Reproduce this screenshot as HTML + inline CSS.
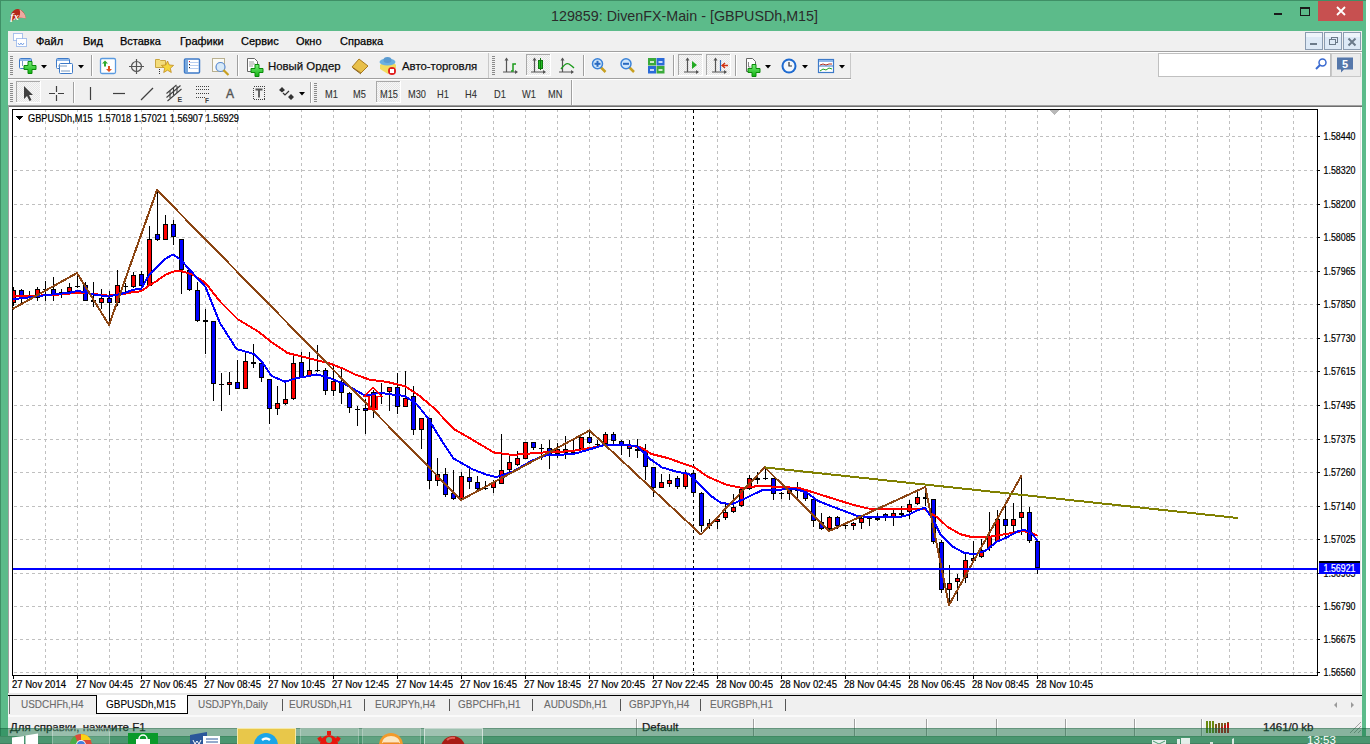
<!DOCTYPE html>
<html><head><meta charset="utf-8">
<style>
*{margin:0;padding:0;box-sizing:border-box}
html,body{width:1370px;height:744px;overflow:hidden;background:#fff;font-family:"Liberation Sans",sans-serif}
.a{position:absolute}
#win{position:absolute;left:0;top:0;width:1366px;height:744px;background:#5cbb8a;border-left:1px solid #3f8f66;border-top:1px solid #3f8f66}
.t{position:absolute;white-space:nowrap;font-family:"Liberation Sans",sans-serif;color:#000;-webkit-text-stroke:0.25px currentColor}
.menu{font-size:11px;top:35px}
.sep{position:absolute;width:1px;background:#a0a0a0;border-right:1px solid #fff}
.grip{position:absolute;width:4px;background:repeating-linear-gradient(#8c8c8c 0 1px,transparent 1px 2px)}
.hl{position:absolute;border:1px solid #c9c9c9;background:#f5f5f5}
.tb{position:absolute;font-size:10.5px;color:#3a3a3a}
.tab{position:absolute;font-size:11px;color:#6a6a6a;top:698px;transform:scaleX(0.905);transform-origin:0 0;-webkit-text-stroke:0.1px currentColor}
.tsep{position:absolute;top:699px;width:1px;height:12px;background:#555}
.st{font-size:11.5px;color:#1a1a1a;top:721px}
.ssep{position:absolute;top:719px;width:2px;height:17px;background:#a0a0a0;border-right:1px solid #fff}
.pl{font-family:"Liberation Sans",sans-serif;font-size:10.4px;fill:#000;stroke:#000;stroke-width:0.2px}
.tl{font-family:"Liberation Sans",sans-serif;font-size:10px;fill:#000;stroke:#000;stroke-width:0.2px}
.hd{font-family:"Liberation Sans",sans-serif;font-size:10.4px;fill:#000;stroke:#000;stroke-width:0.2px;white-space:pre}
.tf{top:87.5px;font-size:10.5px;color:#333;transform:scaleX(0.88);transform-origin:0 0;-webkit-text-stroke:0.1px currentColor}
</style></head><body>
<div id="win"></div>
<!-- title -->
<div class="t" style="left:551px;top:7.7px;font-size:14.3px;color:#2b2b2b;-webkit-text-stroke:0">129859: DivenFX-Main - [GBPUSDh,M15]</div>
<!-- client -->
<div class="a" style="left:8px;top:31px;width:1354px;height:697px;background:#f0f0f0"></div>
<div class="a" style="left:8px;top:51px;width:1354px;height:1px;background:#a0a0a0"></div>
<div class="a" style="left:8px;top:52px;width:1354px;height:1px;background:#fff"></div>
<div class="a" style="left:8px;top:78px;width:843px;height:1px;background:#a0a0a0"></div>
<div class="a" style="left:8px;top:79px;width:843px;height:1px;background:#fff"></div>
<div class="a" style="left:8px;top:105px;width:1354px;height:1px;background:#a0a0a0"></div>

<svg class="a" style="left:0;top:0" width="1370" height="110"><defs><pattern id="chk" width="2" height="2" patternUnits="userSpaceOnUse"><rect width="2" height="2" fill="#f7f7f7"/><rect width="1" height="1" fill="#e6e6e6"/><rect x="1" y="1" width="1" height="1" fill="#e6e6e6"/></pattern><linearGradient id="gplus" x1="0" y1="0" x2="0" y2="1"><stop offset="0" stop-color="#7af07a"/><stop offset="1" stop-color="#10b010"/></linearGradient></defs><path d="M10.5,20.8 C9.8,15 12,10 17,9 C21,8.6 25,12 25.9,18.6 C23,17.4 19.5,17.4 16.5,18.8 C14.5,19.8 12.5,21 10.5,20.8z" fill="#b3271a"/><path d="M19.5,9.6 C23,11 25.4,14.5 25.9,18.6 C23.5,17.6 20.5,17.4 18,18 C20,16 20.8,13 19.5,9.6z" fill="#eea9a0"/><text x="10.3" y="19.6" font-family="Liberation Serif" font-style="italic" font-weight="bold" font-size="10" fill="#fff">fx</text><rect x="1274" y="13" width="8" height="2" fill="#1a1a1a"/><rect x="1300.5" y="7.5" width="9" height="8" fill="none" stroke="#1a1a1a" stroke-width="1"/><rect x="1300" y="7" width="10" height="2" fill="#1a1a1a"/><rect x="1318" y="1" width="45" height="20" fill="#c75050"/><path d="M1337,7 L1345,15 M1345,7 L1337,15" stroke="#fff" stroke-width="1.8" fill="none"/><rect x="13.5" y="33.5" width="9" height="7" fill="#fff" stroke="#5a8de0" stroke-dasharray="1 1"/><rect x="16.5" y="38.5" width="10" height="8" fill="#fff" stroke="#5a8de0" stroke-dasharray="1 1"/><path d="M18,43 l1.5,2 l1.5,-2 l1.5,2 l1.5,-2" stroke="#5a8de0" fill="none" stroke-width=".8"/><rect x="1305.5" y="32.5" width="17" height="17" fill="#dde9f6" stroke="#8a9bb0"/><rect x="1306" y="33" width="16" height="4" fill="#eef4fb"/><rect x="1324.5" y="32.5" width="17" height="17" fill="#dde9f6" stroke="#8a9bb0"/><rect x="1325" y="33" width="16" height="4" fill="#eef4fb"/><rect x="1343.5" y="32.5" width="17" height="17" fill="#dde9f6" stroke="#8a9bb0"/><rect x="1344" y="33" width="16" height="4" fill="#eef4fb"/><rect x="1310" y="43" width="7" height="2" fill="#6b7a8a"/><rect x="1331.5" y="37.5" width="6" height="5" fill="none" stroke="#6b7a8a" stroke-width="1"/><rect x="1329.5" y="39.5" width="6" height="5" fill="#dde9f6" stroke="#6b7a8a" stroke-width="1"/><path d="M1348.5,38.5 L1355.5,45.5 M1355.5,38.5 L1348.5,45.5" stroke="#6b7a8a" stroke-width="2" fill="none"/><rect x="10" y="56" width="3" height="1" fill="#8a8a8a"/><rect x="10" y="58" width="3" height="1" fill="#8a8a8a"/><rect x="10" y="60" width="3" height="1" fill="#8a8a8a"/><rect x="10" y="62" width="3" height="1" fill="#8a8a8a"/><rect x="10" y="64" width="3" height="1" fill="#8a8a8a"/><rect x="10" y="66" width="3" height="1" fill="#8a8a8a"/><rect x="10" y="68" width="3" height="1" fill="#8a8a8a"/><rect x="10" y="70" width="3" height="1" fill="#8a8a8a"/><rect x="10" y="72" width="3" height="1" fill="#8a8a8a"/><rect x="10" y="74" width="3" height="1" fill="#8a8a8a"/><rect x="19.5" y="58.5" width="12" height="10" rx="1" fill="#fff" stroke="#3d7ac8"/><rect x="20" y="59" width="11" height="2" fill="#8fb8ea"/><path d="M22.5,61 v5" stroke="#7a9ac0"/><path d="M28,61.5 h4 v4 h4 v4 h-4 v4 h-4 v-4 h-4 v-4 h4z" fill="url(#gplus)" stroke="#0a8a0a" stroke-width="1"/><path d="M41,65 h6 l-3,3.5 z" fill="#000"/><rect x="56.5" y="58.5" width="13" height="10" rx="1" fill="#fff" stroke="#3d7ac8"/><rect x="57" y="59" width="12" height="2" fill="#8fb8ea"/><rect x="59.5" y="63.5" width="13" height="10" rx="1" fill="#fff" stroke="#3d7ac8"/><path d="M58,66 h9 M61,71 h9" stroke="#7a9ac0"/><path d="M78,65 h6 l-3,3.5 z" fill="#000"/><rect x="91" y="55" width="1" height="21" fill="#a0a0a0"/><rect x="92" y="55" width="1" height="21" fill="#fff"/><rect x="100.5" y="58.5" width="15" height="15" rx="1.5" fill="#fff" stroke="#5a9ae0" stroke-width="1.3"/><path d="M105,60.5 l3,3 h-2 v3 h-2 v-3 h-2z" fill="#2faa2f"/><path d="M109,72 l3,-3 h-2 v-3 h-2 v3 h-2z" fill="#e0501e"/><circle cx="136.5" cy="66.5" r="5" fill="none" stroke="#555" stroke-width="1.2"/><path d="M136.5,59 v15 M129,66.5 h15" stroke="#555" stroke-width="1.2"/><path d="M155.5,59.5 h4 l1,1 h5 v7 h-10z" fill="#f3dc7a" stroke="#c9a640"/><path d="M167.5,61 l1.8,4 4.3,.4 -3.3,2.9 1,4.2 -3.8,-2.3 -3.8,2.3 1,-4.2 -3.3,-2.9 4.3,-.4z" fill="#f5d63c" stroke="#c08a20" stroke-width=".8"/><path d="M159.5,69 v5" stroke="#333" stroke-dasharray="1 1"/><rect x="184.5" y="59" width="15" height="14" rx="1" fill="#fff" stroke="#3d7ac8" stroke-width="1.5"/><rect x="185" y="60" width="3" height="12" fill="#7aa8dc"/><path d="M189,62.5 h10 M189,65.5 h10 M189,68.5 h10" stroke="#b8cff0"/><rect x="189" y="61" width="1" height="1" fill="#e02020"/><rect x="189" y="64" width="1" height="1" fill="#222"/><rect x="189" y="67" width="1" height="1" fill="#222"/><rect x="212.5" y="58.5" width="12" height="13" fill="#fbfaf3" stroke="#b8b090"/><circle cx="220.5" cy="67" r="4.5" fill="#d8eaf8" stroke="#5a8ad0" stroke-width="1.2"/><path d="M223.5,70 l5,5" stroke="#c8a020" stroke-width="2.2"/><rect x="237" y="55" width="1" height="21" fill="#a0a0a0"/><rect x="238" y="55" width="1" height="21" fill="#fff"/><path d="M247.5,58.5 h7 l3,3 v10 h-10z" fill="#fff" stroke="#666"/><path d="M249,62 h5 M249,64 h6 M249,66 h4" stroke="#888" stroke-width=".8"/><path d="M255,64.5 h4 v4 h4 v4 h-4 v4 h-4 v-4 h-4 v-4 h4z" fill="url(#gplus)" stroke="#0a8a0a"/><path d="M352,67 l7,-8 l9,7 l-7,7z" fill="#e8c04a" stroke="#a87a20"/><path d="M353,68 l8,6" stroke="#8a6018"/><path d="M380,65 q8,-9 16,0 v3 l-8,6 l-8,-5z" fill="#f2dc60"/><ellipse cx="387.5" cy="62" rx="8" ry="3.5" fill="#6ab0e0"/><ellipse cx="387.5" cy="60" rx="4" ry="3" fill="#5a9ad0"/><circle cx="392" cy="71" r="4" fill="#e02020"/><rect x="390" y="69" width="4" height="4" fill="#fff"/><rect x="488" y="53" width="1" height="25" fill="#c8c8c8"/><rect x="850" y="53" width="1" height="25" fill="#c8c8c8"/><rect x="492" y="56" width="3" height="1" fill="#8a8a8a"/><rect x="492" y="58" width="3" height="1" fill="#8a8a8a"/><rect x="492" y="60" width="3" height="1" fill="#8a8a8a"/><rect x="492" y="62" width="3" height="1" fill="#8a8a8a"/><rect x="492" y="64" width="3" height="1" fill="#8a8a8a"/><rect x="492" y="66" width="3" height="1" fill="#8a8a8a"/><rect x="492" y="68" width="3" height="1" fill="#8a8a8a"/><rect x="492" y="70" width="3" height="1" fill="#8a8a8a"/><rect x="492" y="72" width="3" height="1" fill="#8a8a8a"/><rect x="492" y="74" width="3" height="1" fill="#8a8a8a"/><g stroke="#555" stroke-width="1.2" fill="none"><path d="M506.5,58.5 v14 M503,72.0 h14"/></g><path d="M506.5,57.5 l-2,3 h4z M518,72.0 l-3,-2 v4z" fill="#555"/><path d="M511,71 h2 v-7 h3" stroke="#1a9a1a" fill="none" stroke-width="1.5"/><rect x="526" y="54" width="25" height="22" fill="url(#chk)"/><rect x="526" y="54" width="25" height="1" fill="#a8a8a8"/><rect x="526" y="54" width="1" height="22" fill="#a8a8a8"/><rect x="526" y="75" width="25" height="1" fill="#fff"/><rect x="550" y="54" width="1" height="22" fill="#fff"/><g stroke="#555" stroke-width="1.2" fill="none"><path d="M534.5,58.5 v14 M531,72.0 h14"/></g><path d="M534.5,57.5 l-2,3 h4z M546,72.0 l-3,-2 v4z" fill="#555"/><rect x="538.5" y="60.5" width="4" height="8" fill="#22c022" stroke="#117711"/><path d="M540.5,58 v12" stroke="#117711"/><g stroke="#555" stroke-width="1.2" fill="none"><path d="M562.5,58.5 v14 M559,72.0 h14"/></g><path d="M562.5,57.5 l-2,3 h4z M574,72.0 l-3,-2 v4z" fill="#555"/><path d="M561,69 q5,-7 8,-5 t5,4" stroke="#1a9a1a" fill="none" stroke-width="1.3"/><rect x="583" y="55" width="1" height="21" fill="#a0a0a0"/><rect x="584" y="55" width="1" height="21" fill="#fff"/><path d="M600.5,67 l5,5" stroke="#c8a020" stroke-width="2.5"/><circle cx="597.5" cy="63.8" r="5" fill="#cfe6fa" stroke="#3a82d8" stroke-width="1.5"/><path d="M594.5,63.8 h6" stroke="#2a6ac0" stroke-width="2"/><path d="M597.5,60.8 v6" stroke="#2a6ac0" stroke-width="2"/><path d="M629,67 l5,5" stroke="#c8a020" stroke-width="2.5"/><circle cx="626" cy="63.8" r="5" fill="#cfe6fa" stroke="#3a82d8" stroke-width="1.5"/><path d="M623,63.8 h6" stroke="#2a6ac0" stroke-width="2"/><rect x="648" y="58" width="8" height="7.5" fill="#3aaa3a"/><rect x="656.5" y="58" width="8" height="7.5" fill="#2a6ad8"/><rect x="648" y="66" width="8" height="7.5" fill="#2a6ad8"/><rect x="656.5" y="66" width="8" height="7.5" fill="#3aaa3a"/><path d="M650,62 h4 M658.5,62 h4 M650,70 h4 M658.5,70 h4" stroke="#fff" stroke-width="1.5"/><rect x="673" y="55" width="1" height="21" fill="#a0a0a0"/><rect x="674" y="55" width="1" height="21" fill="#fff"/><rect x="678" y="54" width="25" height="22" fill="url(#chk)"/><rect x="678" y="54" width="25" height="1" fill="#a8a8a8"/><rect x="678" y="54" width="1" height="22" fill="#a8a8a8"/><rect x="678" y="75" width="25" height="1" fill="#fff"/><rect x="702" y="54" width="1" height="22" fill="#fff"/><g stroke="#555" stroke-width="1.2" fill="none"><path d="M687.5,58.5 v14 M684,72.0 h14"/></g><path d="M687.5,57.5 l-2,3 h4z M699,72.0 l-3,-2 v4z" fill="#555"/><path d="M692,61 l5,4 l-5,4z" fill="#22aa22"/><rect x="706" y="54" width="25" height="22" fill="url(#chk)"/><rect x="706" y="54" width="25" height="1" fill="#a8a8a8"/><rect x="706" y="54" width="1" height="22" fill="#a8a8a8"/><rect x="706" y="75" width="25" height="1" fill="#fff"/><rect x="730" y="54" width="1" height="22" fill="#fff"/><g stroke="#555" stroke-width="1.2" fill="none"><path d="M715.5,58.5 v14 M712,72.0 h14"/></g><path d="M715.5,57.5 l-2,3 h4z M727,72.0 l-3,-2 v4z" fill="#555"/><path d="M720.5,60 v11" stroke="#2a6ac0" stroke-width="1.2"/><path d="M728,65.5 h-5 M725,63 l-3,2.5 3,2.5" stroke="#d03010" stroke-width="1.3" fill="none"/><rect x="735" y="55" width="1" height="21" fill="#a0a0a0"/><rect x="736" y="55" width="1" height="21" fill="#fff"/><path d="M746.5,58.5 h6 l3,3 v10 h-9z" fill="#fff" stroke="#666"/><path d="M748.5,62 v5 h2" stroke="#666" fill="none" stroke-width=".8"/><path d="M752,66.5 h4 v4 h4 v4 h-4 v4 h-4 v-4 h-4 v-4 h4z" fill="url(#gplus)" stroke="#0a8a0a" transform="translate(0,-2)"/><path d="M765,65 h6 l-3,3.5 z" fill="#000"/><circle cx="789" cy="66" r="7.5" fill="#1e6ad0"/><circle cx="789" cy="66" r="5.5" fill="#f4f8fc"/><path d="M789,62 v4 h3" stroke="#333" fill="none" stroke-width="1.2"/><path d="M802,65 h6 l-3,3.5 z" fill="#000"/><rect x="818.5" y="59.5" width="15" height="13" fill="#fff" stroke="#3d7ac8" stroke-width="1.2"/><rect x="819" y="60" width="14" height="2" fill="#8fb8ea"/><path d="M819,66 h14" stroke="#3d7ac8"/><path d="M820,65 l3,-1 3,1 3,-1 3,0" stroke="#b03020" fill="none"/><path d="M820,71 l3,-2 3,1 3,-2 3,1" stroke="#20a020" fill="none"/><path d="M839,65 h6 l-3,3.5 z" fill="#000"/><rect x="1158.5" y="53.5" width="172" height="23" fill="#fff" stroke="#c0c0c0"/><circle cx="1322.5" cy="62.5" r="3.5" fill="none" stroke="#3a6ad0" stroke-width="1.5"/><path d="M1320,65 l-4,4" stroke="#3a6ad0" stroke-width="2"/><rect x="1331.5" y="53.5" width="29" height="23" fill="#ececec" stroke="#c8c8c8"/><path d="M1337,57.5 h16 v12 h-9 l-3,3 v-3 h-4z" fill="#5577aa"/><text x="1342" y="68" font-family="Liberation Sans" font-size="11" font-weight="bold" fill="#fff">5</text><rect x="10" y="83" width="3" height="1" fill="#8a8a8a"/><rect x="10" y="85" width="3" height="1" fill="#8a8a8a"/><rect x="10" y="87" width="3" height="1" fill="#8a8a8a"/><rect x="10" y="89" width="3" height="1" fill="#8a8a8a"/><rect x="10" y="91" width="3" height="1" fill="#8a8a8a"/><rect x="10" y="93" width="3" height="1" fill="#8a8a8a"/><rect x="10" y="95" width="3" height="1" fill="#8a8a8a"/><rect x="10" y="97" width="3" height="1" fill="#8a8a8a"/><rect x="10" y="99" width="3" height="1" fill="#8a8a8a"/><rect x="10" y="101" width="3" height="1" fill="#8a8a8a"/><rect x="16" y="81" width="25" height="22" fill="url(#chk)"/><rect x="16" y="81" width="25" height="1" fill="#a8a8a8"/><rect x="16" y="81" width="1" height="22" fill="#a8a8a8"/><rect x="16" y="102" width="25" height="1" fill="#fff"/><rect x="40" y="81" width="1" height="22" fill="#fff"/><path d="M24,86 v13 l3,-3 l2.5,5 l2,-1 l-2.5,-5 h4z" fill="#404040"/><path d="M56.5,86 v6 M56.5,95 v6 M49,93.5 h6 M58,93.5 h6" stroke="#404040" stroke-width="1.2"/><rect x="73" y="82" width="1" height="21" fill="#a0a0a0"/><rect x="74" y="82" width="1" height="21" fill="#fff"/><path d="M90.5,87 v13" stroke="#404040" stroke-width="1.2"/><path d="M113,93.5 h12" stroke="#404040" stroke-width="1.2"/><path d="M141,100 l12,-12" stroke="#404040" stroke-width="1.2"/><path d="M166.5,97.5 l14,-12 M167.5,101 l14,-12 M166.5,93.5 l10,-8.5" stroke="#404040" stroke-width="1.1" fill="none"/><path d="M170,91 v7 M173.5,88 v7 M177,86 v7" stroke="#404040" stroke-width="1.1" fill="none"/><text x="177.5" y="102" font-family="Liberation Sans" font-size="7" font-weight="bold" fill="#404040">E</text><path d="M196,86.5 h13 M196,89.5 h13 M196,93.5 h13 M196,97.5 h9" stroke="#404040" stroke-dasharray="1 1" shape-rendering="crispEdges"/><text x="205" y="102.5" font-family="Liberation Sans" font-size="6.5" font-weight="bold" fill="#404040">F</text><text x="226" y="98" font-family="Liberation Sans" font-size="12" fill="#555" stroke="#555" stroke-width="0.4">A</text><rect x="253.5" y="86.5" width="11" height="13" fill="none" stroke="#404040" stroke-dasharray="1 1" shape-rendering="crispEdges"/><path d="M255.5,89.5 h7 M259,89.5 v8" stroke="#555" stroke-width="1.8"/><path d="M282,87 l3,3 l-3,2.5 l-3,-2.5z M291,94 l3,3 l-3,3 l-3,-3z" fill="#333"/><path d="M283,93 l2,2 l4,-4" stroke="#333" stroke-width="1.2" fill="none"/><path d="M299,92 h6 l-3,3.5 z" fill="#000"/><rect x="310" y="82" width="1" height="21" fill="#a0a0a0"/><rect x="311" y="82" width="1" height="21" fill="#fff"/><rect x="314" y="83" width="3" height="1" fill="#8a8a8a"/><rect x="314" y="85" width="3" height="1" fill="#8a8a8a"/><rect x="314" y="87" width="3" height="1" fill="#8a8a8a"/><rect x="314" y="89" width="3" height="1" fill="#8a8a8a"/><rect x="314" y="91" width="3" height="1" fill="#8a8a8a"/><rect x="314" y="93" width="3" height="1" fill="#8a8a8a"/><rect x="314" y="95" width="3" height="1" fill="#8a8a8a"/><rect x="314" y="97" width="3" height="1" fill="#8a8a8a"/><rect x="314" y="99" width="3" height="1" fill="#8a8a8a"/><rect x="314" y="101" width="3" height="1" fill="#8a8a8a"/><rect x="376" y="81" width="25" height="22" fill="url(#chk)"/><rect x="376" y="81" width="25" height="1" fill="#a8a8a8"/><rect x="376" y="81" width="1" height="22" fill="#a8a8a8"/><rect x="376" y="102" width="25" height="1" fill="#fff"/><rect x="400" y="81" width="1" height="22" fill="#fff"/><rect x="571" y="80" width="1" height="25" fill="#a0a0a0"/><rect x="572" y="80" width="1" height="25" fill="#fff"/></svg>
<!-- menu -->
<div class="t menu" style="left:36px">Файл</div>
<div class="t menu" style="left:83px">Вид</div>
<div class="t menu" style="left:120px">Вставка</div>
<div class="t menu" style="left:180px">Графики</div>
<div class="t menu" style="left:241px">Сервис</div>
<div class="t menu" style="left:296px">Окно</div>
<div class="t menu" style="left:340px">Справка</div>

<div class="t" style="left:268px;top:60px;font-size:11.4px;color:#111">Новый Ордер</div>
<div class="t" style="left:402px;top:60px;font-size:11.4px;color:#111">Авто-торговля</div>
<div class="t tf" style="left:325px">M1</div>
<div class="t tf" style="left:353px">M5</div>
<div class="t tf" style="left:380px">M15</div>
<div class="t tf" style="left:408px">M30</div>
<div class="t tf" style="left:437px">H1</div>
<div class="t tf" style="left:465px">H4</div>
<div class="t tf" style="left:494px">D1</div>
<div class="t tf" style="left:522px">W1</div>
<div class="t tf" style="left:548px">MN</div>
<!-- chart area -->
<div class="a" style="left:8px;top:106px;width:1354px;height:589px;background:#fff;border-left:1px solid #a0a0a0"></div>
<svg class="a" style="left:0;top:0" width="1370" height="744" shape-rendering="crispEdges"><rect x="9" y="107" width="1352" height="586" fill="#fff"/><rect x="1360" y="107" width="1" height="586" fill="#e3e3e3"/><line x1="45.5" y1="110" x2="45.5" y2="675" stroke="#c0c0c0" stroke-dasharray="3 3" stroke-dashoffset="1"/><line x1="77.5" y1="110" x2="77.5" y2="675" stroke="#c0c0c0" stroke-dasharray="3 3" stroke-dashoffset="1"/><line x1="109.5" y1="110" x2="109.5" y2="675" stroke="#c0c0c0" stroke-dasharray="3 3" stroke-dashoffset="1"/><line x1="141.5" y1="110" x2="141.5" y2="675" stroke="#c0c0c0" stroke-dasharray="3 3" stroke-dashoffset="1"/><line x1="173.5" y1="110" x2="173.5" y2="675" stroke="#c0c0c0" stroke-dasharray="3 3" stroke-dashoffset="1"/><line x1="205.5" y1="110" x2="205.5" y2="675" stroke="#c0c0c0" stroke-dasharray="3 3" stroke-dashoffset="1"/><line x1="237.5" y1="110" x2="237.5" y2="675" stroke="#c0c0c0" stroke-dasharray="3 3" stroke-dashoffset="1"/><line x1="269.5" y1="110" x2="269.5" y2="675" stroke="#c0c0c0" stroke-dasharray="3 3" stroke-dashoffset="1"/><line x1="301.5" y1="110" x2="301.5" y2="675" stroke="#c0c0c0" stroke-dasharray="3 3" stroke-dashoffset="1"/><line x1="333.5" y1="110" x2="333.5" y2="675" stroke="#c0c0c0" stroke-dasharray="3 3" stroke-dashoffset="1"/><line x1="365.5" y1="110" x2="365.5" y2="675" stroke="#c0c0c0" stroke-dasharray="3 3" stroke-dashoffset="1"/><line x1="397.5" y1="110" x2="397.5" y2="675" stroke="#c0c0c0" stroke-dasharray="3 3" stroke-dashoffset="1"/><line x1="429.5" y1="110" x2="429.5" y2="675" stroke="#c0c0c0" stroke-dasharray="3 3" stroke-dashoffset="1"/><line x1="461.5" y1="110" x2="461.5" y2="675" stroke="#c0c0c0" stroke-dasharray="3 3" stroke-dashoffset="1"/><line x1="493.5" y1="110" x2="493.5" y2="675" stroke="#c0c0c0" stroke-dasharray="3 3" stroke-dashoffset="1"/><line x1="525.5" y1="110" x2="525.5" y2="675" stroke="#c0c0c0" stroke-dasharray="3 3" stroke-dashoffset="1"/><line x1="557.5" y1="110" x2="557.5" y2="675" stroke="#c0c0c0" stroke-dasharray="3 3" stroke-dashoffset="1"/><line x1="589.5" y1="110" x2="589.5" y2="675" stroke="#c0c0c0" stroke-dasharray="3 3" stroke-dashoffset="1"/><line x1="621.5" y1="110" x2="621.5" y2="675" stroke="#c0c0c0" stroke-dasharray="3 3" stroke-dashoffset="1"/><line x1="653.5" y1="110" x2="653.5" y2="675" stroke="#c0c0c0" stroke-dasharray="3 3" stroke-dashoffset="1"/><line x1="685.5" y1="110" x2="685.5" y2="675" stroke="#c0c0c0" stroke-dasharray="3 3" stroke-dashoffset="1"/><line x1="717.5" y1="110" x2="717.5" y2="675" stroke="#c0c0c0" stroke-dasharray="3 3" stroke-dashoffset="1"/><line x1="749.5" y1="110" x2="749.5" y2="675" stroke="#c0c0c0" stroke-dasharray="3 3" stroke-dashoffset="1"/><line x1="781.5" y1="110" x2="781.5" y2="675" stroke="#c0c0c0" stroke-dasharray="3 3" stroke-dashoffset="1"/><line x1="813.5" y1="110" x2="813.5" y2="675" stroke="#c0c0c0" stroke-dasharray="3 3" stroke-dashoffset="1"/><line x1="845.5" y1="110" x2="845.5" y2="675" stroke="#c0c0c0" stroke-dasharray="3 3" stroke-dashoffset="1"/><line x1="877.5" y1="110" x2="877.5" y2="675" stroke="#c0c0c0" stroke-dasharray="3 3" stroke-dashoffset="1"/><line x1="909.5" y1="110" x2="909.5" y2="675" stroke="#c0c0c0" stroke-dasharray="3 3" stroke-dashoffset="1"/><line x1="941.5" y1="110" x2="941.5" y2="675" stroke="#c0c0c0" stroke-dasharray="3 3" stroke-dashoffset="1"/><line x1="973.5" y1="110" x2="973.5" y2="675" stroke="#c0c0c0" stroke-dasharray="3 3" stroke-dashoffset="1"/><line x1="1005.5" y1="110" x2="1005.5" y2="675" stroke="#c0c0c0" stroke-dasharray="3 3" stroke-dashoffset="1"/><line x1="1037.5" y1="110" x2="1037.5" y2="675" stroke="#c0c0c0" stroke-dasharray="3 3" stroke-dashoffset="1"/><line x1="1069.5" y1="110" x2="1069.5" y2="675" stroke="#c0c0c0" stroke-dasharray="3 3" stroke-dashoffset="1"/><line x1="1101.5" y1="110" x2="1101.5" y2="675" stroke="#c0c0c0" stroke-dasharray="3 3" stroke-dashoffset="1"/><line x1="1133.5" y1="110" x2="1133.5" y2="675" stroke="#c0c0c0" stroke-dasharray="3 3" stroke-dashoffset="1"/><line x1="1165.5" y1="110" x2="1165.5" y2="675" stroke="#c0c0c0" stroke-dasharray="3 3" stroke-dashoffset="1"/><line x1="1197.5" y1="110" x2="1197.5" y2="675" stroke="#c0c0c0" stroke-dasharray="3 3" stroke-dashoffset="1"/><line x1="1229.5" y1="110" x2="1229.5" y2="675" stroke="#c0c0c0" stroke-dasharray="3 3" stroke-dashoffset="1"/><line x1="1261.5" y1="110" x2="1261.5" y2="675" stroke="#c0c0c0" stroke-dasharray="3 3" stroke-dashoffset="1"/><line x1="1293.5" y1="110" x2="1293.5" y2="675" stroke="#c0c0c0" stroke-dasharray="3 3" stroke-dashoffset="1"/><line x1="13" y1="136.5" x2="1317" y2="136.5" stroke="#c0c0c0" stroke-dasharray="3 3" stroke-dashoffset="5"/><line x1="13" y1="170.5" x2="1317" y2="170.5" stroke="#c0c0c0" stroke-dasharray="3 3" stroke-dashoffset="5"/><line x1="13" y1="204.5" x2="1317" y2="204.5" stroke="#c0c0c0" stroke-dasharray="3 3" stroke-dashoffset="5"/><line x1="13" y1="237.5" x2="1317" y2="237.5" stroke="#c0c0c0" stroke-dasharray="3 3" stroke-dashoffset="5"/><line x1="13" y1="271.5" x2="1317" y2="271.5" stroke="#c0c0c0" stroke-dasharray="3 3" stroke-dashoffset="5"/><line x1="13" y1="304.5" x2="1317" y2="304.5" stroke="#c0c0c0" stroke-dasharray="3 3" stroke-dashoffset="5"/><line x1="13" y1="338.5" x2="1317" y2="338.5" stroke="#c0c0c0" stroke-dasharray="3 3" stroke-dashoffset="5"/><line x1="13" y1="371.5" x2="1317" y2="371.5" stroke="#c0c0c0" stroke-dasharray="3 3" stroke-dashoffset="5"/><line x1="13" y1="405.5" x2="1317" y2="405.5" stroke="#c0c0c0" stroke-dasharray="3 3" stroke-dashoffset="5"/><line x1="13" y1="439.5" x2="1317" y2="439.5" stroke="#c0c0c0" stroke-dasharray="3 3" stroke-dashoffset="5"/><line x1="13" y1="472.5" x2="1317" y2="472.5" stroke="#c0c0c0" stroke-dasharray="3 3" stroke-dashoffset="5"/><line x1="13" y1="506.5" x2="1317" y2="506.5" stroke="#c0c0c0" stroke-dasharray="3 3" stroke-dashoffset="5"/><line x1="13" y1="539.5" x2="1317" y2="539.5" stroke="#c0c0c0" stroke-dasharray="3 3" stroke-dashoffset="5"/><line x1="13" y1="573.5" x2="1317" y2="573.5" stroke="#c0c0c0" stroke-dasharray="3 3" stroke-dashoffset="5"/><line x1="13" y1="606.5" x2="1317" y2="606.5" stroke="#c0c0c0" stroke-dasharray="3 3" stroke-dashoffset="5"/><line x1="13" y1="639.5" x2="1317" y2="639.5" stroke="#c0c0c0" stroke-dasharray="3 3" stroke-dashoffset="5"/><line x1="13" y1="672.5" x2="1317" y2="672.5" stroke="#c0c0c0" stroke-dasharray="3 3" stroke-dashoffset="5"/><rect x="12.5" y="109.5" width="1305" height="566" fill="none" stroke="#000"/><rect x="1317" y="136" width="3" height="1" fill="#000"/><text x="1323.5" y="140" class="pl" textLength="32" lengthAdjust="spacingAndGlyphs">1.58440</text><rect x="1317" y="170" width="3" height="1" fill="#000"/><text x="1323.5" y="174" class="pl" textLength="32" lengthAdjust="spacingAndGlyphs">1.58320</text><rect x="1317" y="204" width="3" height="1" fill="#000"/><text x="1323.5" y="208" class="pl" textLength="32" lengthAdjust="spacingAndGlyphs">1.58200</text><rect x="1317" y="237" width="3" height="1" fill="#000"/><text x="1323.5" y="241" class="pl" textLength="32" lengthAdjust="spacingAndGlyphs">1.58085</text><rect x="1317" y="271" width="3" height="1" fill="#000"/><text x="1323.5" y="275" class="pl" textLength="32" lengthAdjust="spacingAndGlyphs">1.57965</text><rect x="1317" y="304" width="3" height="1" fill="#000"/><text x="1323.5" y="308" class="pl" textLength="32" lengthAdjust="spacingAndGlyphs">1.57850</text><rect x="1317" y="338" width="3" height="1" fill="#000"/><text x="1323.5" y="342" class="pl" textLength="32" lengthAdjust="spacingAndGlyphs">1.57730</text><rect x="1317" y="371" width="3" height="1" fill="#000"/><text x="1323.5" y="375" class="pl" textLength="32" lengthAdjust="spacingAndGlyphs">1.57615</text><rect x="1317" y="405" width="3" height="1" fill="#000"/><text x="1323.5" y="409" class="pl" textLength="32" lengthAdjust="spacingAndGlyphs">1.57495</text><rect x="1317" y="439" width="3" height="1" fill="#000"/><text x="1323.5" y="443" class="pl" textLength="32" lengthAdjust="spacingAndGlyphs">1.57375</text><rect x="1317" y="472" width="3" height="1" fill="#000"/><text x="1323.5" y="476" class="pl" textLength="32" lengthAdjust="spacingAndGlyphs">1.57260</text><rect x="1317" y="506" width="3" height="1" fill="#000"/><text x="1323.5" y="510" class="pl" textLength="32" lengthAdjust="spacingAndGlyphs">1.57140</text><rect x="1317" y="539" width="3" height="1" fill="#000"/><text x="1323.5" y="543" class="pl" textLength="32" lengthAdjust="spacingAndGlyphs">1.57025</text><rect x="1317" y="573" width="3" height="1" fill="#000"/><text x="1323.5" y="577" class="pl" textLength="32" lengthAdjust="spacingAndGlyphs">1.56905</text><rect x="1317" y="606" width="3" height="1" fill="#000"/><text x="1323.5" y="610" class="pl" textLength="32" lengthAdjust="spacingAndGlyphs">1.56790</text><rect x="1317" y="639" width="3" height="1" fill="#000"/><text x="1323.5" y="643" class="pl" textLength="32" lengthAdjust="spacingAndGlyphs">1.56675</text><rect x="1317" y="672" width="3" height="1" fill="#000"/><text x="1323.5" y="676" class="pl" textLength="32" lengthAdjust="spacingAndGlyphs">1.56560</text><rect x="13" y="676" width="1" height="3" fill="#000"/><text x="12" y="688" class="tl" textLength="54" lengthAdjust="spacingAndGlyphs">27 Nov 2014</text><rect x="77" y="676" width="1" height="3" fill="#000"/><text x="76" y="688" class="tl" textLength="57" lengthAdjust="spacingAndGlyphs">27 Nov 04:45</text><rect x="141" y="676" width="1" height="3" fill="#000"/><text x="140" y="688" class="tl" textLength="57" lengthAdjust="spacingAndGlyphs">27 Nov 06:45</text><rect x="205" y="676" width="1" height="3" fill="#000"/><text x="204" y="688" class="tl" textLength="57" lengthAdjust="spacingAndGlyphs">27 Nov 08:45</text><rect x="269" y="676" width="1" height="3" fill="#000"/><text x="268" y="688" class="tl" textLength="57" lengthAdjust="spacingAndGlyphs">27 Nov 10:45</text><rect x="333" y="676" width="1" height="3" fill="#000"/><text x="332" y="688" class="tl" textLength="57" lengthAdjust="spacingAndGlyphs">27 Nov 12:45</text><rect x="397" y="676" width="1" height="3" fill="#000"/><text x="396" y="688" class="tl" textLength="57" lengthAdjust="spacingAndGlyphs">27 Nov 14:45</text><rect x="461" y="676" width="1" height="3" fill="#000"/><text x="460" y="688" class="tl" textLength="57" lengthAdjust="spacingAndGlyphs">27 Nov 16:45</text><rect x="525" y="676" width="1" height="3" fill="#000"/><text x="524" y="688" class="tl" textLength="57" lengthAdjust="spacingAndGlyphs">27 Nov 18:45</text><rect x="589" y="676" width="1" height="3" fill="#000"/><text x="588" y="688" class="tl" textLength="57" lengthAdjust="spacingAndGlyphs">27 Nov 20:45</text><rect x="653" y="676" width="1" height="3" fill="#000"/><text x="652" y="688" class="tl" textLength="57" lengthAdjust="spacingAndGlyphs">27 Nov 22:45</text><rect x="717" y="676" width="1" height="3" fill="#000"/><text x="716" y="688" class="tl" textLength="57" lengthAdjust="spacingAndGlyphs">28 Nov 00:45</text><rect x="781" y="676" width="1" height="3" fill="#000"/><text x="780" y="688" class="tl" textLength="57" lengthAdjust="spacingAndGlyphs">28 Nov 02:45</text><rect x="845" y="676" width="1" height="3" fill="#000"/><text x="844" y="688" class="tl" textLength="57" lengthAdjust="spacingAndGlyphs">28 Nov 04:45</text><rect x="909" y="676" width="1" height="3" fill="#000"/><text x="908" y="688" class="tl" textLength="57" lengthAdjust="spacingAndGlyphs">28 Nov 06:45</text><rect x="973" y="676" width="1" height="3" fill="#000"/><text x="972" y="688" class="tl" textLength="57" lengthAdjust="spacingAndGlyphs">28 Nov 08:45</text><rect x="1037" y="676" width="1" height="3" fill="#000"/><text x="1036" y="688" class="tl" textLength="57" lengthAdjust="spacingAndGlyphs">28 Nov 10:45</text><line x1="693.5" y1="110" x2="693.5" y2="675" stroke="#000" stroke-dasharray="3 3" stroke-dashoffset="0"/><defs><clipPath id="cc"><rect x="13" y="110" width="1304" height="565"/></clipPath></defs><g shape-rendering="crispEdges" clip-path="url(#cc)"><rect x="13" y="287" width="1" height="19" fill="#000"/><rect x="21" y="289" width="1" height="14" fill="#000"/><rect x="29" y="291" width="1" height="7" fill="#000"/><rect x="37" y="287" width="1" height="14" fill="#000"/><rect x="45" y="281" width="1" height="20" fill="#000"/><rect x="53" y="277" width="1" height="24" fill="#000"/><rect x="61" y="289" width="1" height="9" fill="#000"/><rect x="69" y="283" width="1" height="9" fill="#000"/><rect x="77" y="273" width="1" height="15" fill="#000"/><rect x="85" y="282" width="1" height="19" fill="#000"/><rect x="93" y="282" width="1" height="25" fill="#000"/><rect x="101" y="289" width="1" height="20" fill="#000"/><rect x="109" y="291" width="1" height="34" fill="#000"/><rect x="117" y="270" width="1" height="36" fill="#000"/><rect x="125" y="283" width="1" height="10" fill="#000"/><rect x="133" y="272" width="1" height="16" fill="#000"/><rect x="141" y="271" width="1" height="17" fill="#000"/><rect x="149" y="226" width="1" height="60" fill="#000"/><rect x="157" y="190" width="1" height="51" fill="#000"/><rect x="165" y="215" width="1" height="25" fill="#000"/><rect x="173" y="220" width="1" height="25" fill="#000"/><rect x="181" y="239" width="1" height="55" fill="#000"/><rect x="189" y="268" width="1" height="23" fill="#000"/><rect x="197" y="282" width="1" height="40" fill="#000"/><rect x="205" y="309" width="1" height="45" fill="#000"/><rect x="213" y="321" width="1" height="80" fill="#000"/><rect x="221" y="373" width="1" height="38" fill="#000"/><rect x="229" y="372" width="1" height="23" fill="#000"/><rect x="237" y="360" width="1" height="29" fill="#000"/><rect x="245" y="353" width="1" height="36" fill="#000"/><rect x="253" y="344" width="1" height="24" fill="#000"/><rect x="261" y="360" width="1" height="22" fill="#000"/><rect x="269" y="379" width="1" height="45" fill="#000"/><rect x="277" y="386" width="1" height="29" fill="#000"/><rect x="285" y="382" width="1" height="23" fill="#000"/><rect x="293" y="356" width="1" height="44" fill="#000"/><rect x="301" y="352" width="1" height="26" fill="#000"/><rect x="309" y="352" width="1" height="25" fill="#000"/><rect x="317" y="345" width="1" height="27" fill="#000"/><rect x="325" y="368" width="1" height="27" fill="#000"/><rect x="333" y="365" width="1" height="31" fill="#000"/><rect x="341" y="368" width="1" height="36" fill="#000"/><rect x="349" y="392" width="1" height="21" fill="#000"/><rect x="357" y="406" width="1" height="20" fill="#000"/><rect x="365" y="399" width="1" height="35" fill="#000"/><rect x="373" y="390" width="1" height="28" fill="#000"/><rect x="381" y="383" width="1" height="21" fill="#000"/><rect x="389" y="387" width="1" height="24" fill="#000"/><rect x="397" y="373" width="1" height="41" fill="#000"/><rect x="405" y="371" width="1" height="36" fill="#000"/><rect x="413" y="386" width="1" height="49" fill="#000"/><rect x="421" y="418" width="1" height="31" fill="#000"/><rect x="429" y="418" width="1" height="71" fill="#000"/><rect x="437" y="458" width="1" height="28" fill="#000"/><rect x="445" y="468" width="1" height="29" fill="#000"/><rect x="453" y="470" width="1" height="30" fill="#000"/><rect x="461" y="472" width="1" height="28" fill="#000"/><rect x="469" y="469" width="1" height="20" fill="#000"/><rect x="477" y="476" width="1" height="14" fill="#000"/><rect x="485" y="481" width="1" height="9" fill="#000"/><rect x="493" y="480" width="1" height="13" fill="#000"/><rect x="501" y="434" width="1" height="50" fill="#000"/><rect x="509" y="456" width="1" height="16" fill="#000"/><rect x="517" y="451" width="1" height="15" fill="#000"/><rect x="525" y="442" width="1" height="17" fill="#000"/><rect x="533" y="442" width="1" height="8" fill="#000"/><rect x="541" y="444" width="1" height="16" fill="#000"/><rect x="549" y="440" width="1" height="29" fill="#000"/><rect x="557" y="443" width="1" height="15" fill="#000"/><rect x="565" y="436" width="1" height="23" fill="#000"/><rect x="573" y="438" width="1" height="17" fill="#000"/><rect x="581" y="437" width="1" height="12" fill="#000"/><rect x="589" y="432" width="1" height="12" fill="#000"/><rect x="597" y="440" width="1" height="7" fill="#000"/><rect x="605" y="432" width="1" height="14" fill="#000"/><rect x="613" y="432" width="1" height="12" fill="#000"/><rect x="621" y="440" width="1" height="15" fill="#000"/><rect x="629" y="440" width="1" height="17" fill="#000"/><rect x="637" y="439" width="1" height="19" fill="#000"/><rect x="645" y="444" width="1" height="36" fill="#000"/><rect x="653" y="467" width="1" height="30" fill="#000"/><rect x="661" y="474" width="1" height="14" fill="#000"/><rect x="669" y="474" width="1" height="13" fill="#000"/><rect x="677" y="476" width="1" height="13" fill="#000"/><rect x="685" y="470" width="1" height="19" fill="#000"/><rect x="693" y="471" width="1" height="24" fill="#000"/><rect x="701" y="492" width="1" height="40" fill="#000"/><rect x="709" y="519" width="1" height="10" fill="#000"/><rect x="717" y="517" width="1" height="12" fill="#000"/><rect x="725" y="504" width="1" height="16" fill="#000"/><rect x="733" y="494" width="1" height="19" fill="#000"/><rect x="741" y="488" width="1" height="19" fill="#000"/><rect x="749" y="475" width="1" height="15" fill="#000"/><rect x="757" y="472" width="1" height="12" fill="#000"/><rect x="765" y="467" width="1" height="13" fill="#000"/><rect x="773" y="478" width="1" height="22" fill="#000"/><rect x="781" y="492" width="1" height="7" fill="#000"/><rect x="789" y="488" width="1" height="12" fill="#000"/><rect x="797" y="482" width="1" height="16" fill="#000"/><rect x="805" y="490" width="1" height="11" fill="#000"/><rect x="813" y="499" width="1" height="28" fill="#000"/><rect x="821" y="513" width="1" height="17" fill="#000"/><rect x="829" y="516" width="1" height="14" fill="#000"/><rect x="837" y="516" width="1" height="13" fill="#000"/><rect x="845" y="523" width="1" height="6" fill="#000"/><rect x="853" y="522" width="1" height="8" fill="#000"/><rect x="861" y="517" width="1" height="12" fill="#000"/><rect x="869" y="517" width="1" height="9" fill="#000"/><rect x="877" y="513" width="1" height="8" fill="#000"/><rect x="885" y="513" width="1" height="8" fill="#000"/><rect x="893" y="509" width="1" height="17" fill="#000"/><rect x="901" y="506" width="1" height="11" fill="#000"/><rect x="909" y="500" width="1" height="19" fill="#000"/><rect x="917" y="491" width="1" height="14" fill="#000"/><rect x="925" y="490" width="1" height="16" fill="#000"/><rect x="933" y="499" width="1" height="45" fill="#000"/><rect x="941" y="540" width="1" height="53" fill="#000"/><rect x="949" y="565" width="1" height="39" fill="#000"/><rect x="957" y="574" width="1" height="27" fill="#000"/><rect x="965" y="554" width="1" height="29" fill="#000"/><rect x="973" y="541" width="1" height="20" fill="#000"/><rect x="981" y="539" width="1" height="19" fill="#000"/><rect x="989" y="512" width="1" height="39" fill="#000"/><rect x="997" y="510" width="1" height="32" fill="#000"/><rect x="1005" y="505" width="1" height="32" fill="#000"/><rect x="1013" y="503" width="1" height="29" fill="#000"/><rect x="1021" y="475" width="1" height="60" fill="#000"/><rect x="1029" y="507" width="1" height="36" fill="#000"/><rect x="1037" y="541" width="1" height="33" fill="#000"/><rect x="11" y="290" width="5" height="13" fill="#000"/><rect x="12" y="291" width="3" height="11" fill="#ff0000"/><rect x="19" y="290" width="5" height="8" fill="#000"/><rect x="20" y="291" width="3" height="6" fill="#0000ff"/><rect x="27" y="296" width="5" height="1" fill="#000"/><rect x="35" y="289" width="5" height="9" fill="#000"/><rect x="36" y="290" width="3" height="7" fill="#ff0000"/><rect x="43" y="289" width="5" height="1" fill="#000"/><rect x="51" y="289" width="5" height="5" fill="#000"/><rect x="52" y="290" width="3" height="3" fill="#0000ff"/><rect x="59" y="292" width="5" height="3" fill="#000"/><rect x="60" y="293" width="3" height="1" fill="#ff0000"/><rect x="67" y="287" width="5" height="5" fill="#000"/><rect x="68" y="288" width="3" height="3" fill="#ff0000"/><rect x="75" y="286" width="5" height="1" fill="#000"/><rect x="83" y="285" width="5" height="16" fill="#000"/><rect x="84" y="286" width="3" height="14" fill="#0000ff"/><rect x="91" y="300" width="5" height="2" fill="#000"/><rect x="99" y="298" width="5" height="5" fill="#000"/><rect x="100" y="299" width="3" height="3" fill="#ff0000"/><rect x="107" y="298" width="5" height="5" fill="#000"/><rect x="108" y="299" width="3" height="3" fill="#0000ff"/><rect x="115" y="285" width="5" height="18" fill="#000"/><rect x="116" y="286" width="3" height="16" fill="#ff0000"/><rect x="123" y="286" width="5" height="1" fill="#000"/><rect x="131" y="275" width="5" height="12" fill="#000"/><rect x="132" y="276" width="3" height="10" fill="#ff0000"/><rect x="139" y="274" width="5" height="12" fill="#000"/><rect x="140" y="275" width="3" height="10" fill="#0000ff"/><rect x="147" y="239" width="5" height="47" fill="#000"/><rect x="148" y="240" width="3" height="45" fill="#ff0000"/><rect x="155" y="234" width="5" height="6" fill="#000"/><rect x="156" y="235" width="3" height="4" fill="#0000ff"/><rect x="163" y="224" width="5" height="16" fill="#000"/><rect x="164" y="225" width="3" height="14" fill="#ff0000"/><rect x="171" y="224" width="5" height="13" fill="#000"/><rect x="172" y="225" width="3" height="11" fill="#0000ff"/><rect x="179" y="239" width="5" height="31" fill="#000"/><rect x="180" y="240" width="3" height="29" fill="#0000ff"/><rect x="187" y="270" width="5" height="20" fill="#000"/><rect x="188" y="271" width="3" height="18" fill="#0000ff"/><rect x="195" y="290" width="5" height="31" fill="#000"/><rect x="196" y="291" width="3" height="29" fill="#0000ff"/><rect x="203" y="320" width="5" height="2" fill="#000"/><rect x="211" y="321" width="5" height="63" fill="#000"/><rect x="212" y="322" width="3" height="61" fill="#0000ff"/><rect x="219" y="384" width="5" height="1" fill="#000"/><rect x="227" y="382" width="5" height="3" fill="#000"/><rect x="228" y="383" width="3" height="1" fill="#ff0000"/><rect x="235" y="382" width="5" height="7" fill="#000"/><rect x="236" y="383" width="3" height="5" fill="#0000ff"/><rect x="243" y="361" width="5" height="28" fill="#000"/><rect x="244" y="362" width="3" height="26" fill="#ff0000"/><rect x="251" y="362" width="5" height="2" fill="#000"/><rect x="259" y="363" width="5" height="15" fill="#000"/><rect x="260" y="364" width="3" height="13" fill="#0000ff"/><rect x="267" y="379" width="5" height="30" fill="#000"/><rect x="268" y="380" width="3" height="28" fill="#0000ff"/><rect x="275" y="403" width="5" height="6" fill="#000"/><rect x="276" y="404" width="3" height="4" fill="#ff0000"/><rect x="283" y="399" width="5" height="5" fill="#000"/><rect x="284" y="400" width="3" height="3" fill="#ff0000"/><rect x="291" y="363" width="5" height="36" fill="#000"/><rect x="292" y="364" width="3" height="34" fill="#ff0000"/><rect x="299" y="362" width="5" height="15" fill="#000"/><rect x="300" y="363" width="3" height="13" fill="#0000ff"/><rect x="307" y="370" width="5" height="6" fill="#000"/><rect x="308" y="371" width="3" height="4" fill="#ff0000"/><rect x="315" y="370" width="5" height="1" fill="#000"/><rect x="323" y="370" width="5" height="21" fill="#000"/><rect x="324" y="371" width="3" height="19" fill="#0000ff"/><rect x="331" y="381" width="5" height="10" fill="#000"/><rect x="332" y="382" width="3" height="8" fill="#ff0000"/><rect x="339" y="382" width="5" height="11" fill="#000"/><rect x="340" y="383" width="3" height="9" fill="#0000ff"/><rect x="347" y="393" width="5" height="15" fill="#000"/><rect x="348" y="394" width="3" height="13" fill="#0000ff"/><rect x="355" y="409" width="5" height="1" fill="#000"/><rect x="363" y="408" width="5" height="3" fill="#000"/><rect x="364" y="409" width="3" height="1" fill="#0000ff"/><rect x="371" y="392" width="5" height="18" fill="#000"/><rect x="372" y="393" width="3" height="16" fill="#ff0000"/><rect x="379" y="392" width="5" height="1" fill="#000"/><rect x="387" y="387" width="5" height="5" fill="#000"/><rect x="388" y="388" width="3" height="3" fill="#ff0000"/><rect x="395" y="387" width="5" height="20" fill="#000"/><rect x="396" y="388" width="3" height="18" fill="#0000ff"/><rect x="403" y="398" width="5" height="9" fill="#000"/><rect x="404" y="399" width="3" height="7" fill="#ff0000"/><rect x="411" y="396" width="5" height="34" fill="#000"/><rect x="412" y="397" width="3" height="32" fill="#0000ff"/><rect x="419" y="418" width="5" height="12" fill="#000"/><rect x="420" y="419" width="3" height="10" fill="#ff0000"/><rect x="427" y="418" width="5" height="63" fill="#000"/><rect x="428" y="419" width="3" height="61" fill="#0000ff"/><rect x="435" y="474" width="5" height="7" fill="#000"/><rect x="436" y="475" width="3" height="5" fill="#ff0000"/><rect x="443" y="474" width="5" height="21" fill="#000"/><rect x="444" y="475" width="3" height="19" fill="#0000ff"/><rect x="451" y="493" width="5" height="6" fill="#000"/><rect x="452" y="494" width="3" height="4" fill="#0000ff"/><rect x="459" y="476" width="5" height="23" fill="#000"/><rect x="460" y="477" width="3" height="21" fill="#ff0000"/><rect x="467" y="477" width="5" height="5" fill="#000"/><rect x="468" y="478" width="3" height="3" fill="#0000ff"/><rect x="475" y="482" width="5" height="7" fill="#000"/><rect x="476" y="483" width="3" height="5" fill="#0000ff"/><rect x="483" y="488" width="5" height="1" fill="#000"/><rect x="491" y="482" width="5" height="6" fill="#000"/><rect x="492" y="483" width="3" height="4" fill="#ff0000"/><rect x="499" y="470" width="5" height="14" fill="#000"/><rect x="500" y="471" width="3" height="12" fill="#ff0000"/><rect x="507" y="462" width="5" height="8" fill="#000"/><rect x="508" y="463" width="3" height="6" fill="#ff0000"/><rect x="515" y="458" width="5" height="7" fill="#000"/><rect x="516" y="459" width="3" height="5" fill="#ff0000"/><rect x="523" y="442" width="5" height="17" fill="#000"/><rect x="524" y="443" width="3" height="15" fill="#ff0000"/><rect x="531" y="442" width="5" height="6" fill="#000"/><rect x="532" y="443" width="3" height="4" fill="#0000ff"/><rect x="539" y="448" width="5" height="1" fill="#000"/><rect x="547" y="448" width="5" height="8" fill="#000"/><rect x="548" y="449" width="3" height="6" fill="#0000ff"/><rect x="555" y="449" width="5" height="5" fill="#000"/><rect x="556" y="450" width="3" height="3" fill="#ff0000"/><rect x="563" y="449" width="5" height="4" fill="#000"/><rect x="564" y="450" width="3" height="2" fill="#ff0000"/><rect x="571" y="452" width="5" height="1" fill="#000"/><rect x="579" y="437" width="5" height="12" fill="#000"/><rect x="580" y="438" width="3" height="10" fill="#ff0000"/><rect x="587" y="437" width="5" height="6" fill="#000"/><rect x="588" y="438" width="3" height="4" fill="#0000ff"/><rect x="595" y="444" width="5" height="1" fill="#000"/><rect x="603" y="434" width="5" height="10" fill="#000"/><rect x="604" y="435" width="3" height="8" fill="#ff0000"/><rect x="611" y="434" width="5" height="7" fill="#000"/><rect x="612" y="435" width="3" height="5" fill="#0000ff"/><rect x="619" y="441" width="5" height="5" fill="#000"/><rect x="620" y="442" width="3" height="3" fill="#0000ff"/><rect x="627" y="446" width="5" height="3" fill="#000"/><rect x="628" y="447" width="3" height="1" fill="#0000ff"/><rect x="635" y="449" width="5" height="2" fill="#000"/><rect x="643" y="450" width="5" height="17" fill="#000"/><rect x="644" y="451" width="3" height="15" fill="#0000ff"/><rect x="651" y="467" width="5" height="21" fill="#000"/><rect x="652" y="468" width="3" height="19" fill="#0000ff"/><rect x="659" y="482" width="5" height="6" fill="#000"/><rect x="660" y="483" width="3" height="4" fill="#ff0000"/><rect x="667" y="480" width="5" height="4" fill="#000"/><rect x="668" y="481" width="3" height="2" fill="#ff0000"/><rect x="675" y="478" width="5" height="9" fill="#000"/><rect x="676" y="479" width="3" height="7" fill="#0000ff"/><rect x="683" y="473" width="5" height="14" fill="#000"/><rect x="684" y="474" width="3" height="12" fill="#ff0000"/><rect x="691" y="473" width="5" height="20" fill="#000"/><rect x="692" y="474" width="3" height="18" fill="#0000ff"/><rect x="699" y="493" width="5" height="33" fill="#000"/><rect x="700" y="494" width="3" height="31" fill="#0000ff"/><rect x="707" y="523" width="5" height="3" fill="#000"/><rect x="708" y="524" width="3" height="1" fill="#ff0000"/><rect x="715" y="519" width="5" height="3" fill="#000"/><rect x="716" y="520" width="3" height="1" fill="#ff0000"/><rect x="723" y="512" width="5" height="6" fill="#000"/><rect x="724" y="513" width="3" height="4" fill="#ff0000"/><rect x="731" y="507" width="5" height="5" fill="#000"/><rect x="732" y="508" width="3" height="3" fill="#ff0000"/><rect x="739" y="489" width="5" height="17" fill="#000"/><rect x="740" y="490" width="3" height="15" fill="#ff0000"/><rect x="747" y="478" width="5" height="11" fill="#000"/><rect x="748" y="479" width="3" height="9" fill="#ff0000"/><rect x="755" y="478" width="5" height="2" fill="#000"/><rect x="763" y="478" width="5" height="1" fill="#000"/><rect x="771" y="478" width="5" height="16" fill="#000"/><rect x="772" y="479" width="3" height="14" fill="#0000ff"/><rect x="779" y="493" width="5" height="1" fill="#000"/><rect x="787" y="490" width="5" height="4" fill="#000"/><rect x="788" y="491" width="3" height="2" fill="#ff0000"/><rect x="795" y="490" width="5" height="1" fill="#000"/><rect x="803" y="492" width="5" height="7" fill="#000"/><rect x="804" y="493" width="3" height="5" fill="#0000ff"/><rect x="811" y="499" width="5" height="22" fill="#000"/><rect x="812" y="500" width="3" height="20" fill="#0000ff"/><rect x="819" y="522" width="5" height="7" fill="#000"/><rect x="820" y="523" width="3" height="5" fill="#0000ff"/><rect x="827" y="517" width="5" height="12" fill="#000"/><rect x="828" y="518" width="3" height="10" fill="#ff0000"/><rect x="835" y="517" width="5" height="9" fill="#000"/><rect x="836" y="518" width="3" height="7" fill="#0000ff"/><rect x="843" y="525" width="5" height="1" fill="#000"/><rect x="851" y="523" width="5" height="3" fill="#000"/><rect x="852" y="524" width="3" height="1" fill="#ff0000"/><rect x="859" y="518" width="5" height="5" fill="#000"/><rect x="860" y="519" width="3" height="3" fill="#ff0000"/><rect x="867" y="518" width="5" height="1" fill="#000"/><rect x="875" y="518" width="5" height="2" fill="#000"/><rect x="883" y="514" width="5" height="4" fill="#000"/><rect x="884" y="515" width="3" height="2" fill="#0000ff"/><rect x="891" y="513" width="5" height="5" fill="#000"/><rect x="892" y="514" width="3" height="3" fill="#ff0000"/><rect x="899" y="513" width="5" height="2" fill="#000"/><rect x="907" y="504" width="5" height="8" fill="#000"/><rect x="908" y="505" width="3" height="6" fill="#ff0000"/><rect x="915" y="497" width="5" height="7" fill="#000"/><rect x="916" y="498" width="3" height="5" fill="#ff0000"/><rect x="923" y="497" width="5" height="2" fill="#000"/><rect x="931" y="499" width="5" height="43" fill="#000"/><rect x="932" y="500" width="3" height="41" fill="#0000ff"/><rect x="939" y="542" width="5" height="48" fill="#000"/><rect x="940" y="543" width="3" height="46" fill="#0000ff"/><rect x="947" y="583" width="5" height="7" fill="#000"/><rect x="948" y="584" width="3" height="5" fill="#ff0000"/><rect x="955" y="578" width="5" height="4" fill="#000"/><rect x="956" y="579" width="3" height="2" fill="#ff0000"/><rect x="963" y="560" width="5" height="18" fill="#000"/><rect x="964" y="561" width="3" height="16" fill="#ff0000"/><rect x="971" y="558" width="5" height="3" fill="#000"/><rect x="972" y="559" width="3" height="1" fill="#ff0000"/><rect x="979" y="550" width="5" height="7" fill="#000"/><rect x="980" y="551" width="3" height="5" fill="#ff0000"/><rect x="987" y="536" width="5" height="12" fill="#000"/><rect x="988" y="537" width="3" height="10" fill="#ff0000"/><rect x="995" y="519" width="5" height="23" fill="#000"/><rect x="996" y="520" width="3" height="21" fill="#ff0000"/><rect x="1003" y="519" width="5" height="7" fill="#000"/><rect x="1004" y="520" width="3" height="5" fill="#0000ff"/><rect x="1011" y="519" width="5" height="7" fill="#000"/><rect x="1012" y="520" width="3" height="5" fill="#ff0000"/><rect x="1019" y="512" width="5" height="6" fill="#000"/><rect x="1020" y="513" width="3" height="4" fill="#ff0000"/><rect x="1027" y="512" width="5" height="29" fill="#000"/><rect x="1028" y="513" width="3" height="27" fill="#0000ff"/><rect x="1035" y="541" width="5" height="27" fill="#000"/><rect x="1036" y="542" width="3" height="25" fill="#0000ff"/></g><polyline points="12.8,296.0 32.0,296.0 56.4,294.7 75.7,293.0 86.6,293.3 100.0,294.7 108.4,295.7 116.8,294.7 125.0,293.7 133.0,292.0 141.0,291.3 149.0,285.6 157.0,280.8 165.0,275.0 173.0,271.6 181.0,271.0 193.4,275.0 205.5,283.0 220.3,301.8 237.8,319.3 258.0,331.4 271.4,342.0 287.5,353.0 309.0,358.3 330.5,363.7 344.0,369.0 354.7,374.4 370.0,379.8 386.0,381.7 405.0,386.2 418.4,395.0 434.5,408.5 453.3,428.7 469.5,438.0 493.7,452.4 512.5,455.0 531.3,453.4 544.7,452.4 560.0,452.0 576.0,450.4 592.0,447.7 605.7,445.0 624.5,445.0 640.6,447.2 651.4,454.0 667.5,458.0 681.0,462.8 694.4,467.4 707.8,476.8 726.7,484.8 742.8,488.0 760.8,485.7 776.9,487.0 798.4,487.8 809.0,491.0 830.6,497.8 852.0,504.5 868.3,508.5 889.8,509.4 911.3,508.5 924.7,509.4 938.2,518.0 947.3,526.7 960.2,534.2 973.1,537.4 986.0,537.4 999.0,535.3 1011.8,533.0 1022.6,531.0 1031.2,533.0 1037.6,535.7" fill="none" stroke="#ff0000" stroke-width="2" stroke-linejoin="round"/><polyline points="12.8,299.0 20.0,298.4 32.0,297.0 44.3,295.3 56.4,294.0 68.5,293.0 77.0,291.0 83.0,291.7 90.2,294.0 100.0,295.3 108.4,296.6 116.8,294.7 125.0,293.0 133.0,289.7 141.0,289.0 149.0,275.0 157.0,267.0 165.0,259.0 173.0,254.5 181.0,260.0 190.8,271.0 205.5,287.0 220.0,323.0 236.5,349.0 254.0,354.0 262.0,362.0 271.4,375.8 284.8,381.7 295.6,378.4 317.0,374.4 330.5,378.4 346.7,385.0 365.5,396.0 380.0,392.5 386.0,393.8 405.0,396.0 417.0,404.5 427.8,418.0 440.0,438.0 453.3,458.3 472.0,469.0 485.6,474.4 496.3,477.0 512.5,471.7 531.3,461.0 544.7,455.6 560.0,454.7 573.4,454.0 589.6,449.4 605.7,444.5 624.5,444.5 638.0,446.7 648.7,458.0 662.0,467.4 675.6,471.4 689.0,474.0 699.8,484.8 710.5,495.6 721.3,503.0 732.0,504.2 745.5,498.3 750.0,496.0 763.4,489.7 776.9,489.7 795.7,489.0 806.5,492.4 817.2,500.5 830.6,505.9 846.8,512.0 857.5,516.0 873.7,517.4 889.8,516.6 900.0,517.0 908.6,514.8 917.2,510.5 924.7,507.7 932.3,518.0 940.9,535.3 951.6,546.0 964.5,553.0 975.3,554.2 986.0,550.3 996.8,541.7 1007.5,537.0 1018.3,531.0 1024.7,529.9 1031.2,533.0 1037.6,540.6" fill="none" stroke="#0000ff" stroke-width="2" stroke-linejoin="round"/><polyline points="12.5,309.0 77.0,273.0 109.0,325.0 157.0,190.0 461.0,500.0 589.6,430.5 701.0,534.6 764.8,467.4 829.3,530.9 925.3,487.0 949.0,605.0 1021.5,475.5" fill="none" stroke="#8b4513" stroke-width="2" stroke-linejoin="round"/><line x1="764.8" y1="467.4" x2="1238" y2="518" stroke="#808000" stroke-width="2"/><path d="M364.5,396.5 L373,387.5 L381.5,396.5 L377,396.5 L377,409 L369,409 L369,396.5 Z" fill="none" stroke="#ff0000" stroke-width="1.5"/><rect x="13" y="568" width="1304" height="2" fill="#0000ff"/><rect x="1319" y="561" width="41" height="2" fill="#000"/><rect x="1319" y="563" width="41" height="11" fill="#0000ff"/><text x="1323.5" y="572" class="pl" style="fill:#fff;stroke:#fff" textLength="32" lengthAdjust="spacingAndGlyphs">1.56921</text><path d="M1050,110 L1059,110 L1054.5,115 Z" fill="#b8b8b8"/><path d="M16,116 L23,116 L19.5,120 Z" fill="#000"/><text x="28" y="122" class="hd" textLength="211" lengthAdjust="spacingAndGlyphs">GBPUSDh,M15  1.57018 1.57021 1.56907 1.56929</text></svg>
<div class="a" style="left:9px;top:106px;width:1353px;height:1px;background:#6d6d6d"></div>

<!-- tabs -->
<div class="a" style="left:8px;top:693px;width:1354px;height:2px;background:#e8e8e8"></div>
<div class="a" style="left:8px;top:695px;width:1354px;height:1px;background:#000"></div>
<div class="a" style="left:8px;top:696px;width:1354px;height:19px;background:#f0f0f0"></div>
<div class="a" style="left:9px;top:696px;width:1px;height:18px;background:#707070"></div>
<div class="a" style="left:96px;top:695px;width:92px;height:19px;background:#fff;border:1px solid #000;border-top:none"></div>
<div class="t tab" style="left:21px">USDCHFh,H4</div>
<div class="t tab" style="left:106px;color:#000">GBPUSDh,M15</div>
<div class="t tab" style="left:198px">USDJPYh,Daily</div>
<div class="t tab" style="left:289px">EURUSDh,H1</div>
<div class="t tab" style="left:375px">EURJPYh,H4</div>
<div class="t tab" style="left:458px">GBPCHFh,H1</div>
<div class="t tab" style="left:544px">AUDUSDh,H1</div>
<div class="t tab" style="left:629px">GBPJPYh,H4</div>
<div class="t tab" style="left:710px">EURGBPh,H1</div>
<div class="tsep" style="left:282px"></div><div class="tsep" style="left:364px"></div><div class="tsep" style="left:449px"></div><div class="tsep" style="left:532px"></div><div class="tsep" style="left:620px"></div><div class="tsep" style="left:700px"></div><div class="tsep" style="left:785px"></div>
<svg class="a" style="left:1330px;top:700px" width="30" height="12"><path d="M7,2 v6 l-3,-3z" fill="#9a9a9a"/><path d="M21,2 v6 l3,-3z" fill="#9a9a9a"/></svg>
<div class="a" style="left:8px;top:715px;width:1354px;height:2px;background:#fafafa"></div>
<!-- status -->
<div class="a" style="left:8px;top:717px;width:1354px;height:19px;background:#f0f0f0"></div>
<div class="t st" style="left:10px">Для справки, нажмите F1</div>
<div class="t st" style="left:642px">Default</div>
<div class="t st" style="left:1263px">1461/0 kb</div>
<div class="ssep" style="left:636px"></div><div class="ssep" style="left:753px"></div><div class="ssep" style="left:854px"></div><div class="ssep" style="left:926px"></div><div class="ssep" style="left:996px"></div><div class="ssep" style="left:1065px"></div><div class="ssep" style="left:1134px"></div><div class="ssep" style="left:1201px"></div>
<svg class="a" style="left:1205px;top:720px" width="28" height="15">
<g fill="#6a8a10"><rect x="1" y="1" width="2" height="12"/><rect x="4" y="1" width="2" height="12"/><rect x="7" y="1" width="2" height="12"/></g>
<g fill="#7a5a20"><rect x="10" y="4" width="2" height="9"/><rect x="13" y="3" width="2" height="10"/><rect x="16" y="3" width="2" height="10"/><rect x="19" y="3" width="2" height="10"/><rect x="22" y="2" width="2" height="11"/></g>
<g fill="#c01010"><rect x="13" y="9" width="2" height="4"/><rect x="16" y="7" width="2" height="6"/><rect x="19" y="5" width="2" height="8"/><rect x="22" y="3" width="2" height="10"/></g>
</svg>
<svg class="a" style="left:1348px;top:718px" width="14" height="18"><path d="M13,4 L2,15 M13,8 L6,15 M13,12 L10,15" stroke="#a0a0a0" stroke-width="1"/></svg>
<!-- taskbar -->
<div class="a" style="left:0;top:728px;width:1370px;height:8px;background:rgba(20,110,65,0.47)"></div>
<div class="a" style="left:0;top:728px;width:1370px;height:1px;background:rgba(20,80,50,0.3)"></div>
<div class="a" style="left:0;top:736px;width:1370px;height:8px;background:#4a9670"></div>
<div class="a" style="left:0;top:736px;width:1370px;height:1px;background:#3f8a62"></div>
<div class="a" style="left:0;top:743px;width:1370px;height:1px;background:#3f8060"></div>
<svg class="a" style="left:0;top:728px" width="1370" height="16">
<path d="M12,9.5 L24,8 V16 H12z M25.5,7.5 L38,5.5 V16 H25.5z" fill="#fff"/>
<rect x="52.5" y="0.5" width="57" height="16" fill="rgba(255,255,255,0.15)" stroke="rgba(255,255,255,0.35)"/>
<circle cx="81" cy="17" r="11" fill="#dd4b39"/><path d="M70,17 a11,11 0 0 1 5,-9 l4,9z" fill="#4aae48"/><path d="M81,6 a11,11 0 0 1 10,6 l-10,0z" fill="#fcd116"/><circle cx="81" cy="17" r="5" fill="#fff"/><circle cx="81" cy="17" r="4" fill="#3f7fe0"/>
<rect x="128" y="5" width="30" height="11" fill="#0a9a2a"/><path d="M136,16 v-5 h14 v5z" fill="#fff"/><path d="M139,11 a4,4 0 0 1 8,0" stroke="#fff" fill="none" stroke-width="1.5"/>
<path d="M190,7 L207,4 V16 H190z" fill="#2b579a"/><rect x="203" y="8" width="17" height="8" fill="#fff"/><path d="M206,11 h12 M206,14 h12" stroke="#2b579a"/><path d="M193,12 l2,4 l2,-3 l2,3 l2,-4" stroke="#fff" fill="none"/>
<rect x="237.5" y="0.5" width="58" height="16" fill="#e8c74a" stroke="#f5e9a8"/>
<circle cx="266" cy="17" r="12" fill="#1aa5e8"/><path d="M262,12 q4,-3 8,0" stroke="#fff" stroke-width="2.5" fill="none"/>
<rect x="300.5" y="0.5" width="58" height="16" fill="rgba(255,255,255,0.12)" stroke="rgba(255,255,255,0.3)"/>
<circle cx="329" cy="16" r="9" fill="#e8160c"/><circle cx="329" cy="12" r="3" fill="#6aae88"/><g fill="#e8160c"><rect x="327" y="3" width="4" height="4"/><rect x="318" y="9" width="4" height="4" transform="rotate(-30 320 11)"/><rect x="336" y="9" width="4" height="4" transform="rotate(30 338 11)"/></g>
<rect x="362.5" y="0.5" width="58" height="16" fill="rgba(255,255,255,0.12)" stroke="rgba(255,255,255,0.3)"/>
<circle cx="391" cy="17" r="12" fill="#f39a2a"/><path d="M382,15 a9,7 0 0 1 18,0z" fill="#fde6c0"/><path d="M383,15 h16" stroke="#e8781a"/>
<rect x="424.5" y="0.5" width="58" height="16" fill="rgba(255,255,255,0.2)" stroke="rgba(255,255,255,0.6)"/>
<circle cx="453" cy="20" r="12" fill="#a81c14"/><path d="M447,12 a7,5 0 0 1 8,-2" stroke="#e06058" stroke-width="2" fill="none"/>
<path d="M1152,12 h14 v4 h-14z" fill="#fff" opacity=".85"/><path d="M1153,13 l6,3 6,-3" stroke="#4a9a70" fill="none"/>
<path d="M1177,11 h3 v5 h-3z M1181,10 h9 v6 h-9z" fill="#fff" opacity=".85"/>
<rect x="1210" y="14" width="3" height="2" fill="#fff" opacity=".8"/><path d="M1232,11 l2,-1 v6 h-2z" fill="#fff" opacity=".8"/>
<text x="1307" y="15.5" font-family="Liberation Sans" font-size="11.5" fill="#fff">13:53</text>
</svg>
</body></html>
